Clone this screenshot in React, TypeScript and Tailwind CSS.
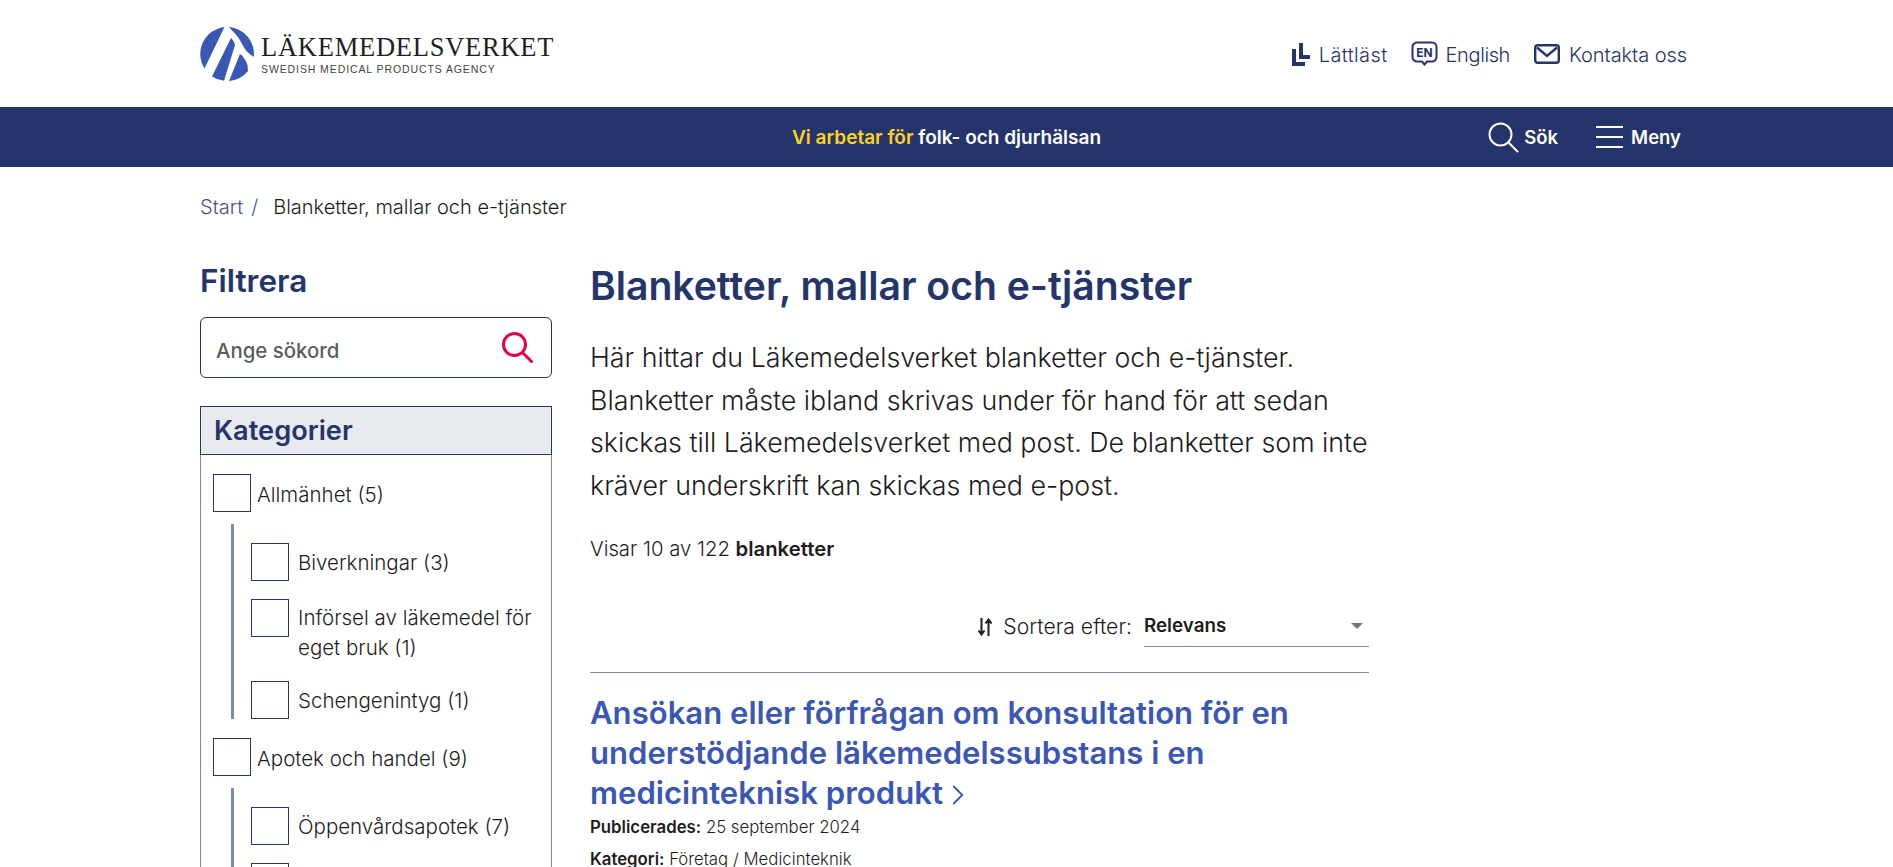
import { ChevronRight } from 'lucide-react';

const font = { fontFamily: 'Inter, sans-serif' };

function Logo() {
  return (
    <div className="flex items-center gap-[7px]">
      <svg width="54" height="54" viewBox="0 0 54 54" fill="#3b57b5">
        <path d="M24.5 0.1 L4.5 41.5 A27 27 0 0 1 24.5 0.1 Z" />
        <path d="M31 11 C33 13 34.5 15 35 18 L24 53.8 A27 27 0 0 1 12 49.5 Z" />
        <path d="M40 27 C43 29 46 33 47.5 38 L48 44 A27 27 0 0 1 29 53.9 Z" />
        <path d="M29 0.1 A27 27 0 0 1 53.8 30 C49 27 45 23 42 17 C39 10 34 6 29 0.1 Z" />
      </svg>
      <div className="flex flex-col pt-[1px]">
        <span className="font-['Liberation_Serif',serif] text-[26.5px] leading-[27px] tracking-[0.75px] text-[#1f1f1f]">LÄKEMEDELSVERKET</span>
        <span className="mt-[2px] font-['Liberation_Sans',sans-serif] text-[10.5px] leading-[12px] tracking-[0.9px] text-[#444]">SWEDISH MEDICAL PRODUCTS AGENCY</span>
      </div>
    </div>
  );
}

function LlIcon() {
  return (
    <svg className="mt-[2px]" width="18" height="23" viewBox="0 0 18 23" fill="#25346a">
      <path d="M0 6h4v13h9v4H0z" />
      <path d="M7 0h4v12h7v4H7z" />
    </svg>
  );
}

function EnIcon() {
  return (
    <svg width="27" height="25" viewBox="0 0 27 25" fill="none">
      <path d="M6 1.5h15a4.5 4.5 0 0 1 4.5 4.5v10a4.5 4.5 0 0 1-4.5 4.5h-5l-2.5 3-2.5-3H6A4.5 4.5 0 0 1 1.500 16V6A4.500 4.500 0 0 1 6 1.500z" stroke="#25346a" strokeWidth="2" />
      <text x="13.500" y="15.500" textAnchor="middle" fontSize="12" fontWeight="700" fill="#25346a" fontFamily="Inter, sans-serif">EN</text>
    </svg>
  );
}

function MailIcon() {
  return (
    <svg width="26" height="20" viewBox="0 0 26 20" fill="none" stroke="#25346a" strokeWidth="2.4">
      <rect x="1.200" y="1.200" width="23.600" height="17.600" rx="2.500" />
      <path d="M3 3.500 L13 12 L23 3.500" />
    </svg>
  );
}

function SearchIcon({ color, width }: { color: string; width: number }) {
  return (
    <svg width="31" height="31" viewBox="0 0 31 31" fill="none" stroke={color} strokeWidth={width} strokeLinecap="round">
      <circle cx="12.500" cy="12.500" r="11" />
      <path d="M21 21 L29.500 29.500" />
    </svg>
  );
}

function MenuIcon() {
  return (
    <svg width="27" height="22" viewBox="0 0 27 22" fill="none" stroke="#fff" strokeWidth="2">
      <path d="M0 1h27M0 11h27M0 21h27" />
    </svg>
  );
}

function SortIcon() {
  return (
    <svg width="14" height="18" viewBox="0 0 14 18" fill="none" stroke="#1d1d1d" strokeWidth="2">
      <path d="M3.500 0v16M0.500 12.500l3 4 3-4" />
      <path d="M10.500 18V2M7.500 5.500l3-4 3 4" />
    </svg>
  );
}

function TopLink({ icon, label, labelClass }: { icon: React.ReactNode; label: string; labelClass: string }) {
  return (
    <a className="flex items-center gap-[9px] text-[20px] font-light text-[#25346a]">
      {icon}
      <span className={labelClass}>{label}</span>
    </a>
  );
}

function Checkbox() {
  return <span className="block w-[38px] h-[38px] shrink-0 border border-[#25346a]" />;
}

function Cat({ label }: { label: string }) {
  return (
    <div className="flex items-center gap-[6px] h-[38px] text-[20.5px] font-light text-[#1d1d1d]">
      <Checkbox />
      <span className="pt-[4px]">{label}</span>
    </div>
  );
}

function SubCat({ label, twoLines }: { label: React.ReactNode; twoLines?: boolean }) {
  return (
    <div className="flex items-start gap-[9px] text-[20.5px] leading-[30px] font-light text-[#1d1d1d]">
      <Checkbox />
      <span className={twoLines ? 'pt-[4px]' : 'pt-[5px]'}>{label}</span>
    </div>
  );
}

export default function App() {
  return (
    <div style={font} className="h-[867px] overflow-hidden bg-white">
      <header className="h-[107px] pl-[200px] pr-[206px] flex items-center justify-between">
        <Logo />
        <div className="flex items-center">
          <TopLink icon={<LlIcon />} label="Lättläst" labelClass="pt-[3px] tracking-[0.4px]" />
          <div className="w-[23px]" />
          <TopLink icon={<EnIcon />} label="English" labelClass="-ml-[1px] pt-[3px] tracking-[-0.4px]" />
          <div className="w-[24px]" />
          <TopLink icon={<MailIcon />} label="Kontakta oss" labelClass="pt-[3px] tracking-[-0.05px]" />
        </div>
      </header>

      <nav className="relative h-[60px] bg-[#25346a] flex items-center justify-center text-white text-[19px] font-semibold">
        <p className="pt-[2px]">
          <span className="text-[#ffd21f]">Vi arbetar för</span> folk- och djurhälsan
        </p>
        <div className="absolute right-[212px] top-0 h-full flex items-center gap-[38px] text-[18.500px]">
          <a className="flex items-center gap-[5px]">
            <SearchIcon color="#fff" width={2} />
            <span className="pt-[2px]">Sök</span>
          </a>
          <a className="flex items-center gap-[8px]">
            <MenuIcon />
            <span className="pt-[2px]">Meny</span>
          </a>
        </div>
      </nav>

      <div className="px-[200px]">
        <div className="pt-[28px] flex items-center text-[20px] font-light leading-[24px] text-[#1d1d1d]">
          <a className="text-[#4a4f9a]">Start</a>
          <span className="ml-[8px] mr-[15px] text-[#4a4f9a]">/</span>
          <span>Blanketter, mallar och e-tjänster</span>
        </div>

        <div className="flex gap-[38px] pt-[36px]">
          <aside className="w-[352px] shrink-0">
            <h2 className="text-[31.500px] leading-[40px] font-semibold text-[#25346a] pt-[6px]">Filtrera</h2>
            <div className="mt-[16px] h-[61px] border border-[#25346a] rounded-[6px] flex items-center justify-between pl-[15px] pr-[18px]">
              <span className="pt-[7px] text-[20.400px] font-medium text-[#5c5c5c]">Ange sökord</span>
              <SearchIcon color="#e0004d" width={3} />
            </div>
            <div className="mt-[28px] border-x border-[#7d8aa8]">
              <div className="-mx-px h-[49px] bg-[#e7eaef] border border-[#25346a] flex items-center pl-[13px] pt-[1px] text-[27.200px] font-semibold text-[#25346a]">
                Kategorier
              </div>
              <div className="px-[12px] pt-[19px] pb-[40px]">
                <Cat label="Allmänhet (5)" />
                <div className="mt-[12px] ml-[18px] border-l-[3px] border-[#7d8aa8] pl-[17px] pt-[19px] flex flex-col gap-[18px]">
                  <SubCat label="Biverkningar (3)" />
                  <SubCat twoLines label={<>Införsel av läkemedel för<br />eget bruk (1)</>} />
                  <SubCat label="Schengenintyg (1)" />
                </div>
                <div className="mt-[19px]">
                  <Cat label="Apotek och handel (9)" />
                </div>
                <div className="mt-[12px] ml-[18px] border-l-[3px] border-[#7d8aa8] pl-[17px] pt-[19px] flex flex-col gap-[18px]">
                  <SubCat label="Öppenvårdsapotek (7)" />
                  <SubCat label="Partihandel (2)" />
                </div>
              </div>
            </div>
          </aside>

          <main className="w-[779px] shrink-0">
            <h1 className="text-[39.100px] leading-[50px] font-semibold text-[#25346a] pt-[6px]">Blanketter, mallar och e-tjänster</h1>
            <p className="mt-[25px] text-[26.800px] leading-[42.700px] font-light text-[#1d1d1d]">
              Här hittar du Läkemedelsverket blanketter och e-tjänster. Blanketter måste ibland skrivas under för hand för att sedan skickas till Läkemedelsverket med post. De blanketter som inte kräver underskrift kan skickas med e-post.
            </p>
            <p className="mt-[28px] text-[20.300px] leading-[28px] font-light text-[#1d1d1d]">
              Visar 10 av 122 <strong className="font-semibold">blanketter</strong>
            </p>
            <div className="mt-[44px] flex justify-end items-center gap-[12px] text-[21.200px]">
              <span className="flex items-center gap-[11px] font-light text-[#1d1d1d]">
                <SortIcon />
                Sortera efter:
              </span>
              <div className="w-[225px] h-[40px] border-b border-[#8a8a8a] flex items-center justify-between pr-[2px] text-[18.800px]">
                <span className="font-semibold text-[#1d1d1d]">Relevans</span>
                <span className="w-0 h-0 border-x-[6px] border-x-transparent border-t-[6px] border-t-[#777] mr-[4px]" />
              </div>
            </div>
            <div className="mt-[25px] border-t border-[#7d8aa8]" />
            <h3 className="mt-[20px] text-[31.100px] leading-[40px] font-semibold text-[#3b57b5]">
              Ansökan eller förfrågan om konsultation för en understödjande läkemedelssubstans i en medicinteknisk produkt <ChevronRight className="inline align-middle -ml-[10px]" size={34} strokeWidth={1.3} />
            </h3>
            <p className="mt-[1px] text-[16.800px] leading-[26px] font-light text-[#1d1d1d]"><strong className="font-semibold">Publicerades:</strong> 25 september 2024</p>
            <p className="mt-[6px] text-[16.800px] leading-[26px] font-light text-[#1d1d1d]"><strong className="font-semibold">Kategori:</strong> Företag / Medicinteknik</p>
          </main>
        </div>
      </div>
    </div>
  );
}
